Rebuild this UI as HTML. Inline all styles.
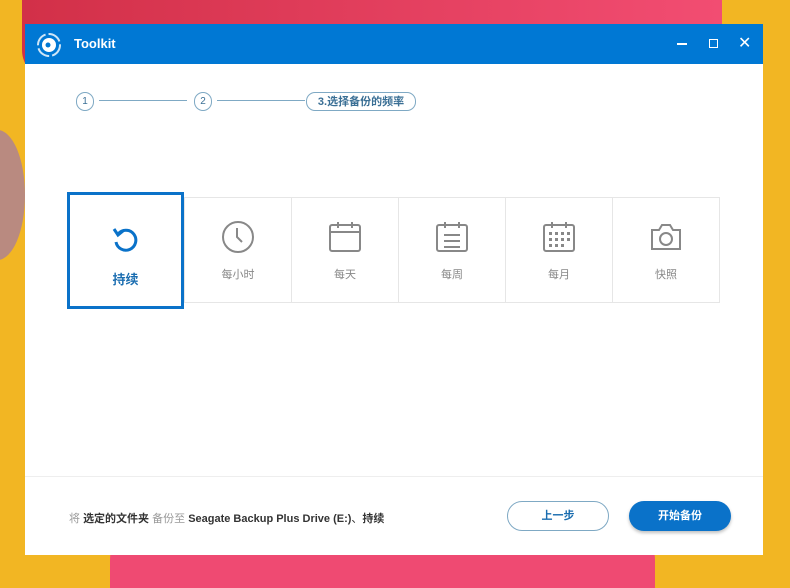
<!DOCTYPE html>
<html style="overflow:hidden;width:790px;height:588px"><head><meta charset="utf-8"><style>
body{margin:0;width:790px;height:588px;overflow:hidden;position:relative;background:#f2b623;font-family:"Liberation Sans","Noto Sans CJK SC",sans-serif}
.pink1{position:absolute;left:22px;top:-40px;width:700px;height:120px;background:linear-gradient(90deg,#d23048,#f24d72);border-radius:30px}
.pink2{position:absolute;left:110px;top:520px;width:545px;height:68px;background:#ef4a72;border-radius:40px 40px 0 0}
.yarn{position:absolute;left:-30px;top:130px;width:55px;height:130px;background:#b98a80;border-radius:50%}
.win{position:absolute;left:25px;top:24px;width:738px;height:531px;background:#fff}
.tb{height:40px;background:#0078d4;color:#fff;position:relative}
.tb .t{position:absolute;left:49px;top:12px;font-weight:bold;font-size:13px}
.step{position:absolute;top:68px;height:17px;border:1px solid #7fa9c4;border-radius:9px;font-size:10px;color:#3a6f95;line-height:18px;text-align:center}
.ln{position:absolute;top:76px;height:1px;background:#7fa9c4}
.card{position:absolute;top:173px;width:108px;height:106px;border:1px solid #e6e6e6;box-sizing:border-box;text-align:center;font-size:11px;color:#888}
.card svg{position:absolute;left:36px;top:22px}
.card span{position:absolute;left:0;right:0;top:68px}
.sel{left:42px;top:168px;width:117px;height:117px;border:3px solid #0a72c9;box-sizing:border-box;position:absolute;text-align:center;color:#1a6db0;font-size:13px;font-weight:bold}
.btn{position:absolute;top:477px;width:102px;height:30px;border-radius:16px;box-sizing:border-box;font-size:11px;font-weight:bold;text-align:center;line-height:30px}
</style></head><body>
<div class="pink1"></div><div class="pink2"></div><div class="yarn"></div>
<div class="win">
<div class="tb">
<svg style="position:absolute;left:11px;top:8px" width="26" height="26" viewBox="0 0 26 26"><circle cx="13" cy="13" r="11" fill="none" stroke="#cfe6f7" stroke-width="2" stroke-dasharray="14 3"/><circle cx="13" cy="13" r="7" fill="#fff"/><circle cx="12" cy="13" r="2.5" fill="#0078d4"/></svg>
<div class="t">Toolkit</div>
<div style="position:absolute;left:652px;top:19px;width:10px;height:1.5px;background:#fff"></div>
<div style="position:absolute;left:684px;top:15px;width:7px;height:7px;border:1.5px solid #fff"></div>
<div style="position:absolute;left:713px;top:9px;font-size:16px;color:#fff">✕</div>
</div>
<div class="step" style="left:51px;width:16px">1</div>
<div class="ln" style="left:74px;width:88px"></div>
<div class="step" style="left:169px;width:16px">2</div>
<div class="ln" style="left:192px;width:88px"></div>
<div class="step" style="left:281px;width:108px;font-weight:bold;font-size:11px">3.选择备份的频率</div>
<div class="sel"><svg style="position:absolute;left:38px;top:28px" width="36" height="36" viewBox="0 0 36 36"><path d="M10 11 A10 10 0 1 1 8 19" fill="none" stroke="#0a72c9" stroke-width="3"/><path d="M6 6 L10 12 L15 8" fill="none" stroke="#0a72c9" stroke-width="3"/></svg><div style="position:absolute;left:0;right:0;top:74px">持续</div></div>
<div class="card" style="left:159px"><svg width="34" height="34" viewBox="0 0 34 34"><circle cx="17" cy="17" r="15" fill="none" stroke="#888" stroke-width="2"/><path d="M16 8 V17 L21 22" fill="none" stroke="#888" stroke-width="2"/></svg><span>每小时</span></div>
<div class="card" style="left:266px"><svg width="34" height="34" viewBox="0 0 34 34"><rect x="2" y="5" width="30" height="26" rx="2" fill="none" stroke="#888" stroke-width="2"/><path d="M2 12H32M10 2V8M24 2V8" stroke="#888" stroke-width="2"/></svg><span>每天</span></div>
<div class="card" style="left:373px"><svg width="34" height="34" viewBox="0 0 34 34"><rect x="2" y="5" width="30" height="26" rx="2" fill="none" stroke="#888" stroke-width="2"/><path d="M10 2V8M24 2V8M9 15H25M9 21H25M9 27H25" stroke="#888" stroke-width="2"/></svg><span>每周</span></div>
<div class="card" style="left:480px"><svg width="34" height="34" viewBox="0 0 34 34"><rect x="2" y="5" width="30" height="26" rx="2" fill="none" stroke="#888" stroke-width="2"/><path d="M10 2V8M24 2V8" stroke="#888" stroke-width="2"/><g fill="#888"><rect x="7" y="12" width="3" height="3"/><rect x="13" y="12" width="3" height="3"/><rect x="19" y="12" width="3" height="3"/><rect x="25" y="12" width="3" height="3"/><rect x="7" y="18" width="3" height="3"/><rect x="13" y="18" width="3" height="3"/><rect x="19" y="18" width="3" height="3"/><rect x="25" y="18" width="3" height="3"/><rect x="7" y="24" width="3" height="3"/><rect x="13" y="24" width="3" height="3"/><rect x="19" y="24" width="3" height="3"/></g></svg><span>每月</span></div>
<div class="card" style="left:587px"><svg width="34" height="34" viewBox="0 0 34 34"><path d="M3 10H10L13 5H21L24 10H31V29H3Z" fill="none" stroke="#888" stroke-width="2"/><circle cx="17" cy="19" r="6" fill="none" stroke="#888" stroke-width="2"/></svg><span>快照</span></div>
<div style="position:absolute;left:0;right:0;top:452px;height:1px;background:#eee"></div>
<div style="position:absolute;left:44px;top:486px;font-size:11px;color:#333"><span style="color:#999">将</span> <b>选定的文件夹</b> <span style="color:#999">备份至</span> <b>Seagate Backup Plus Drive (E:)</b>、<b>持续</b></div>
<div class="btn" style="left:482px;border:1px solid #7fa9c4;color:#1a6db0;line-height:28px">上一步</div>
<div class="btn" style="left:604px;background:#0a72c9;color:#fff;box-shadow:0 2px 3px rgba(0,0,0,.25)">开始备份</div>
</div>
</body></html>
